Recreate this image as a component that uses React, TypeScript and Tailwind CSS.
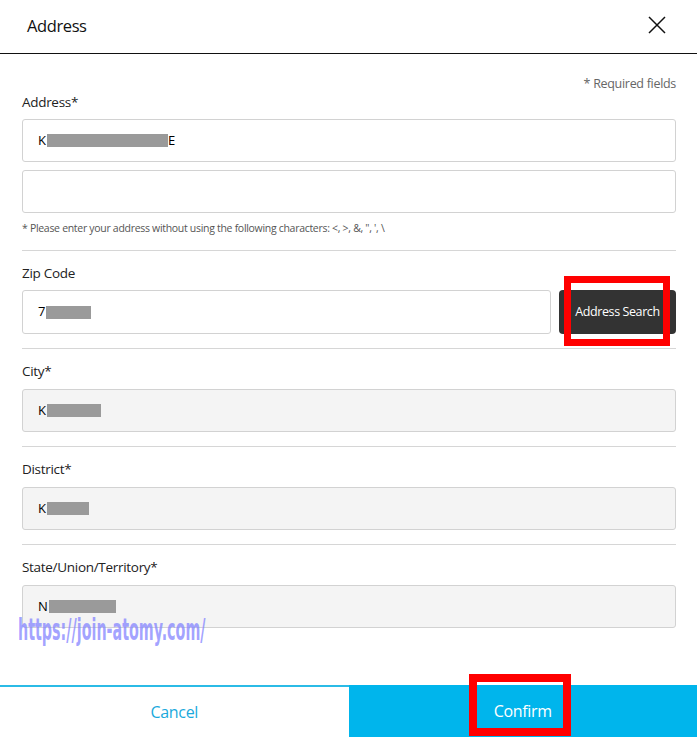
import type { ReactNode } from 'react';

const font = "font-['Open_Sans','Noto_Sans',sans-serif]";

function Label({ children }: { children: ReactNode }) {
  return <div className="h-5 text-[13.5px] leading-5 tracking-[-0.3px] text-[#222]">{children}</div>;
}

function Redacted({ lead, w }: { lead: string; w: string }) {
  return (
    <span className="flex items-center text-[13px] text-black">
      {lead}
      <span className={`ml-[1px] inline-block h-[13px] bg-[#9a9a9a] ${w}`} />
    </span>
  );
}

function Field({ children, readOnly }: { children?: ReactNode; readOnly?: boolean }) {
  return (
    <div
      className={`flex h-[43px] items-center rounded-[3px] border border-[#d2d2d2] pl-[15px] ${
        readOnly ? 'bg-[#f4f4f4]' : 'bg-white'
      }`}
    >
      {children}
    </div>
  );
}

function Divider() {
  return <div className="h-px bg-[#d6d6d6]" />;
}

export default function App() {
  return (
    <div className={`relative flex h-[737px] w-[697px] flex-col bg-white ${font}`}>
      {/* header */}
      <div className="flex h-[54px] shrink-0 items-center justify-between border-b-[1.5px] border-[#111] pl-[27px] pr-[31px]">
        <h1 className="text-[16.5px] leading-none tracking-[-0.4px] text-[#111]">Address</h1>
        <svg width="18" height="18" viewBox="0 0 18 18" className="mt-[-4px]">
          <path d="M1 1L17 17M17 1L1 17" stroke="#111" strokeWidth="1.5" fill="none" />
        </svg>
      </div>

      {/* body */}
      <div className="flex-1 pl-[22px] pr-[21px]">
        <div className="mt-[21px] h-[18px] text-right text-[12.5px] leading-[18px] tracking-[-0.3px] text-[#666]">
          * Required fields
        </div>
        <div className="mt-[-1px]">
          <Label>Address*</Label>
        </div>
        <div className="mt-[7px] flex flex-col gap-[8px]">
          <Field>
            <Redacted lead="K" w="w-[121px]" />
            <span className="text-[13px] text-black">E</span>
          </Field>
          <Field />
        </div>
        <div className="mt-[7px] h-[16px] text-[10.5px] leading-4 tracking-[-0.3px] text-[#555]">
          * Please enter your address without using the following characters: &lt;, &gt;, &amp;, ", ', \
        </div>
        <div className="mt-[14px]">
          <Divider />
        </div>

        <div className="pt-[12px]">
          <Label>Zip Code</Label>
          <div className="mt-[7px] flex h-[44px] gap-[8px]">
            <div className="flex flex-1 items-center rounded-[3px] border border-[#d2d2d2] pl-[15px]">
              <Redacted lead="7" w="w-[45px]" />
            </div>
            <button className="w-[117px] rounded-[4px] bg-[#333333] text-[12.5px] tracking-[-0.4px] text-white">
              Address Search
            </button>
          </div>
        </div>
        <div className="mt-[14px]">
          <Divider />
        </div>

        {[
          { label: 'City*', lead: 'K', w: 'w-[54px]' },
          { label: 'District*', lead: 'K', w: 'w-[42px]' },
          { label: 'State/Union/Territory*', lead: 'N', w: 'w-[67px]' },
        ].map((f, i) => (
          <div key={f.label}>
            <div className="pt-[12px]">
              <Label>{f.label}</Label>
              <div className="mt-[8px]">
                <Field readOnly>
                  <Redacted lead={f.lead} w={f.w} />
                </Field>
              </div>
            </div>
            {i < 2 && (
              <div className="mt-[14px]">
                <Divider />
              </div>
            )}
          </div>
        ))}
      </div>

      {/* footer */}
      <div className="flex h-[52px] shrink-0">
        <button className="flex-1 border-t-2 border-[#2bbbe6] bg-white text-[16px] tracking-[-0.3px] text-[#1aa9dc]">
          Cancel
        </button>
        <button className="flex-1 bg-[#00b5ec] text-[16px] tracking-[-0.3px] text-white">Confirm</button>
      </div>

      {/* watermark */}
      <div className="pointer-events-none absolute left-[18px] top-[614px] origin-left scale-x-[0.53] font-['DejaVu_Sans_Condensed','DejaVu_Sans',sans-serif] text-[30px] font-bold leading-[32px] text-[#8585ff]/75">
        https://join-atomy.com/
      </div>

      {/* annotation boxes */}
      <div className="pointer-events-none absolute left-[564px] top-[276px] h-[70px] w-[106px] border-[7px] border-[#ff0000]" />
      <div className="pointer-events-none absolute left-[469px] top-[674px] h-[62px] w-[102px] border-[8px] border-[#ff0000]" />
    </div>
  );
}
